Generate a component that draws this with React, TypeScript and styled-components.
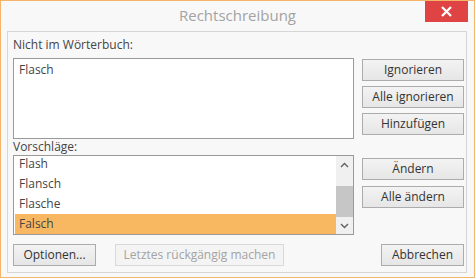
import React from "react";
import styled, { createGlobalStyle } from "styled-components";

const Global = createGlobalStyle`
  html, body { margin: 0; padding: 0; background: #ffffff; }
  body { font-family: "Open Sans", "Noto Sans", sans-serif; font-size: 12px; color: #444444; }
  * { box-sizing: border-box; }
`;

const Window = styled.div`
  width: 475px;
  height: 278px;
  border: 1px solid #f4b56a;
  background: #f8f8f8;
  display: flex;
  flex-direction: column;
`;

const TitleBar = styled.div`
  height: 30px;
  display: grid;
  grid-template-columns: 1fr auto 1fr;
  align-items: start;
`;

const Title = styled.div`
  grid-column: 2;
  font-size: 15px;
  line-height: 29px;
  color: #a3a3a3;
  white-space: nowrap;
`;

const CloseButton = styled.div`
  grid-column: 3;
  justify-self: end;
  margin-right: 6px;
  width: 43px;
  height: 21px;
  background: #e04343;
  display: flex;
  align-items: center;
  justify-content: center;
`;

const Panel = styled.div`
  margin: 0 7px 4px 6px;
  flex: 1;
  border: 1px solid #d6d6d6;
  background: #f8f8f8;
  padding: 5px 2px 6px 5px;
  display: grid;
  grid-template-columns: 341px 102px;
  column-gap: 8px;
  align-content: start;
`;

const Label = styled.div<{ $gap: number }>`
  grid-column: 1;
  line-height: 16px;
  height: 16px;
  margin-bottom: ${(p) => p.$gap}px;
  white-space: nowrap;
`;

const TextBox = styled.div`
  grid-column: 1;
  height: 81px;
  border: 1px solid #9a9a9a;
  background: #ffffff;
  padding: 3px 5px;
  line-height: 16px;
`;

const ButtonColumn = styled.div<{ $top: number; $gap: number }>`
  grid-column: 2;
  display: flex;
  flex-direction: column;
  gap: ${(p) => p.$gap}px;
  padding-top: ${(p) => p.$top}px;
`;

const Button = styled.div<{ $width?: number; $disabled?: boolean }>`
  height: 22px;
  width: ${(p) => (p.$width ? `${p.$width}px` : "100%")};
  border: 1px solid ${(p) => (p.$disabled ? "#d9d9d9" : "#acacac")};
  background: ${(p) =>
    p.$disabled ? "#f4f4f4" : "linear-gradient(#f3f3f3, #e6e6e6)"};
  color: ${(p) => (p.$disabled ? "#a3a3a3" : "#333333")};
  display: flex;
  align-items: center;
  justify-content: center;
  line-height: 16px;
  white-space: nowrap;
`;

const ListBox = styled.div`
  grid-column: 1;
  height: 80px;
  border: 1px solid #9a9a9a;
  background: #ffffff;
  display: flex;
  overflow: hidden;
`;

const Rows = styled.div`
  flex: 1;
  overflow: hidden;
`;

const RowsInner = styled.div<{ $scroll: number }>`
  margin-top: -${(p) => p.$scroll}px;
`;

const Row = styled.div<{ $selected?: boolean }>`
  height: 20px;
  line-height: 20px;
  margin-left: 1px;
  padding-left: 4px;
  background: ${(p) => (p.$selected ? "#f8b862" : "transparent")};
  color: #444444;
`;

const ScrollBar = styled.div`
  width: 17px;
  background: #f0f0f0;
  display: flex;
  flex-direction: column;
`;

const ArrowBox = styled.div`
  height: 17px;
  display: flex;
  align-items: center;
  justify-content: center;
`;

const Track = styled.div`
  flex: 1;
  display: flex;
  flex-direction: column;
`;

const Thumb = styled.div`
  margin-top: 13px;
  height: 31px;
  background: #c6c6c6;
`;

const Footer = styled.div`
  grid-column: 1 / span 2;
  margin-top: 9px;
  display: flex;
  gap: 19px;
`;

const Spacer = styled.div`
  flex: 1;
`;

const Chevron = ({ up }: { up?: boolean }) => (
  <svg width="9" height="6" viewBox="0 0 9 6">
    <polyline
      points={up ? "1,5 4.5,1.5 8,5" : "1,1 4.5,4.5 8,1"}
      fill="none"
      stroke="#606060"
      strokeWidth="1.4"
    />
  </svg>
);

export default function App() {
  return (
    <>
      <Global />
      <Window>
        <TitleBar>
          <Title>Rechtschreibung</Title>
          <CloseButton>
            <svg width="11" height="11" viewBox="0 0 11 11">
              <path d="M1 1 L10 10 M10 1 L1 10" stroke="#ffffff" strokeWidth="2.3" />
            </svg>
          </CloseButton>
        </TitleBar>
        <Panel>
          <Label $gap={5}>Nicht im Wörterbuch:</Label>
          <div />
          <TextBox>Flasch</TextBox>
          <ButtonColumn $top={1} $gap={5}>
            <Button>Ignorieren</Button>
            <Button>Alle ignorieren</Button>
            <Button>Hinzufügen</Button>
          </ButtonColumn>
          <Label $gap={0}>Vorschläge:</Label>
          <div />
          <ListBox>
            <Rows>
              <RowsInner $scroll={2}>
                <Row>Flash</Row>
                <Row>Flansch</Row>
                <Row>Flasche</Row>
                <Row $selected>Falsch</Row>
              </RowsInner>
            </Rows>
            <ScrollBar>
              <ArrowBox>
                <Chevron up />
              </ArrowBox>
              <Track>
                <Thumb />
              </Track>
              <ArrowBox>
                <Chevron />
              </ArrowBox>
            </ScrollBar>
          </ListBox>
          <ButtonColumn $top={3} $gap={6}>
            <Button>Ändern</Button>
            <Button>Alle ändern</Button>
          </ButtonColumn>
          <Footer>
            <Button $width={83}>Optionen...</Button>
            <Button $width={169} $disabled>
              Letztes rückgängig machen
            </Button>
            <Spacer />
            <Button $width={83}>Abbrechen</Button>
          </Footer>
        </Panel>
      </Window>
    </>
  );
}
